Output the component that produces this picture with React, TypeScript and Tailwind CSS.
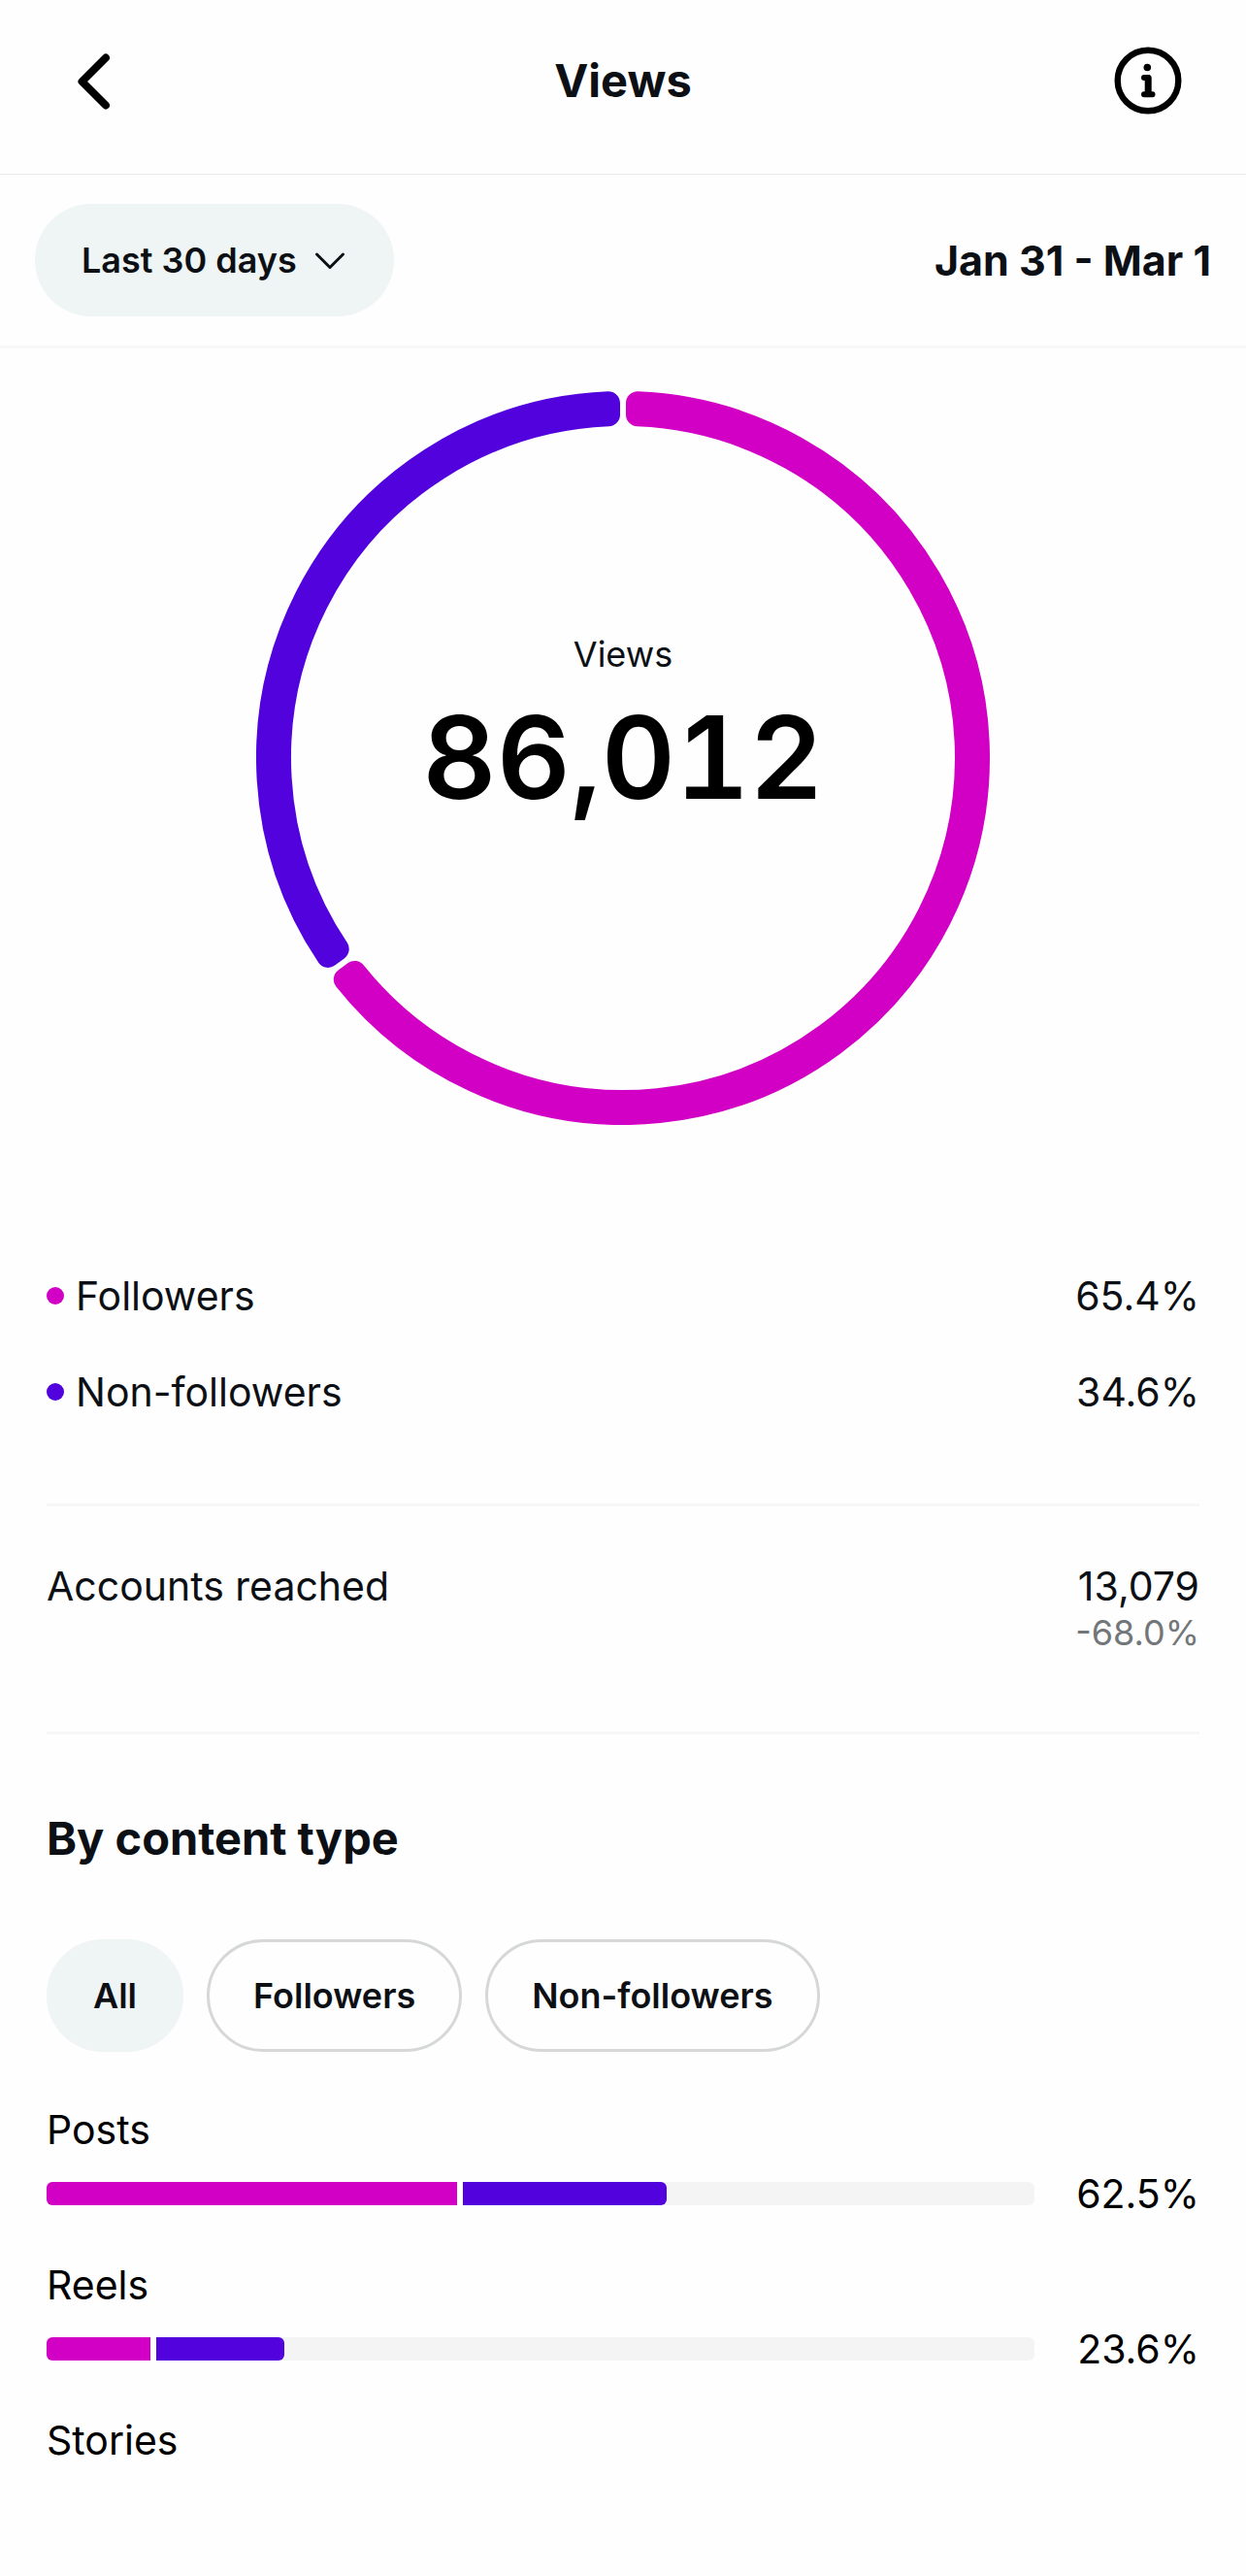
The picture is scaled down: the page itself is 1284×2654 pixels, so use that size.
import React, { useState } from 'react';

type Audience = 'All' | 'Followers' | 'Non-followers';

interface ContentRow {
  name: string;
  total: string;
  followers: number;
  nonFollowers: number;
}

const audiences: Audience[] = ['All', 'Followers', 'Non-followers'];

const contentRows: ContentRow[] = [
  { name: 'Posts', total: '62.5%', followers: 41.6, nonFollowers: 20.6 },
  { name: 'Reels', total: '23.6%', followers: 10.5, nonFollowers: 13 },
];

const CENTER = 378;
const CORNER = 12;
const GAP = 6;

// Ring slice with rounded corners: the outline is inset by the corner radius
// and then stroked with round joins.
const slicePath = (from: number, to: number) => {
  const outer = 378 - CORNER;
  const inner = 342 + CORNER;
  const point = (r: number, deg: number, side: number) => {
    const a = (deg * Math.PI) / 180 + side * Math.asin((GAP / 2 + CORNER) / r);
    return `${(CENTER + r * Math.sin(a)).toFixed(2)} ${(CENTER - r * Math.cos(a)).toFixed(2)}`;
  };
  const large = to - from > 180 ? 1 : 0;
  return [
    `M${point(outer, from, 1)}`,
    `A${outer} ${outer} 0 ${large} 1 ${point(outer, to, -1)}`,
    `L${point(inner, to, -1)}`,
    `A${inner} ${inner} 0 ${large} 0 ${point(inner, from, 1)}Z`,
  ].join('');
};

const ViewsRing = () => (
  <div className="relative mx-auto aspect-square w-[756px] max-w-full">
    <svg viewBox="0 0 756 756" className="block w-full" strokeWidth={CORNER * 2} strokeLinejoin="round" aria-hidden="true">
      <path d={slicePath(0, 233.8)} fill="#d100c4" stroke="#d100c4" />
      <path d={slicePath(233.8, 360)} fill="#5203dd" stroke="#5203dd" />
    </svg>
    <div className="absolute inset-0 flex flex-col items-center justify-center gap-3.5 pb-15">
      <p className="text-[36px] leading-[44px]">Views</p>
      <p className="text-[118px] leading-[140px] font-semibold text-black tabular-nums">86,012</p>
    </div>
  </div>
);

const LegendRow = ({ label, value, dot }: { label: string; value: string; dot: string }) => (
  <div className="flex items-center justify-between">
    <span className="flex items-center gap-3">
      <span className={`size-[18px] rounded-full ${dot}`} />
      {label}
    </span>
    <span>{value}</span>
  </div>
);

const ContentBar = ({ row }: { row: ContentRow }) => (
  <div>
    <p>{row.name}</p>
    <div className="mt-3.5 flex items-center">
      <div className="flex h-6 flex-1 overflow-hidden rounded-md bg-[#f4f4f4]">
        <div className="bg-[#d100c4]" style={{ width: `${row.followers}%` }} />
        <div className="w-1.5 bg-white" />
        <div className="rounded-r-md bg-[#5203dd]" style={{ width: `${row.nonFollowers}%` }} />
      </div>
      <span className="w-[170px] text-right">{row.total}</span>
    </div>
  </div>
);

const App: React.FC = () => {
  const [period, setPeriod] = useState('Last 30 days');
  const [audience, setAudience] = useState<Audience>('All');

  return (
    <div className="min-h-screen bg-[#fefefe] font-['Inter',sans-serif] text-[41px] leading-[52px] text-[#0c1014]">
      <header className="flex h-[180px] items-center justify-between border-b border-[#e7eaeb] px-[66px] pb-3.5">
        <button type="button" aria-label="Back" className="flex size-[70px] items-center justify-center">
          <svg viewBox="0 0 70 70" className="size-[70px]" fill="none" stroke="#000" strokeWidth="8" strokeLinecap="round" strokeLinejoin="round">
            <path d="M43 11.500 18.500 36 43 60.500" />
          </svg>
        </button>
        <h1 className="text-[47px] leading-[56px] font-bold">Views</h1>
        <button type="button" aria-label="About views" className="flex size-[70px] items-center justify-center">
          <svg viewBox="0 0 70 70" className="size-[70px]" fill="none" stroke="#000" strokeWidth="6" strokeLinecap="round" strokeLinejoin="round">
            <circle cx="35" cy="35" r="31.300" strokeWidth="6.400" />
            <circle cx="34.300" cy="21.500" r="3.800" fill="#000" stroke="none" />
            <path d="M31 32h4M31 49.200h8.500" />
            <path d="M35.200 32.600v16" strokeWidth="7" />
          </svg>
        </button>
      </header>

      {/* Period */}
      <div className="flex items-center justify-between border-b-3 border-[#f7f7f7] px-9 py-[30px]">
        <div className="relative">
          <select
            aria-label="Period"
            className="h-[116px] w-[370px] appearance-none rounded-full bg-[#eff4f5] pl-12 text-[36px] leading-[44px] font-semibold"
            value={period}
            onChange={(e) => setPeriod(e.target.value)}
          >
            <option>Last 7 days</option>
            <option>Last 30 days</option>
            <option>Last 90 days</option>
          </select>
          <svg viewBox="0 0 34 20" className="pointer-events-none absolute top-[49px] right-[49px] h-5 w-[34px]" fill="none" stroke="#0c1014" strokeWidth="3" strokeLinecap="round" strokeLinejoin="round">
            <path d="M3.500 3 17 16.500 30.500 3" />
          </svg>
        </div>
        <span className="text-[43px] font-bold">Jan 31 - Mar 1</span>
      </div>

      <main className="px-12 pt-11 pb-20">
        <ViewsRing />

        <section className="mt-[150px] flex flex-col gap-[47px] border-b-3 border-[#f7f7f7] pb-[89px]">
          <LegendRow label="Followers" value="65.4%" dot="bg-[#d100c4]" />
          <LegendRow label="Non-followers" value="34.6%" dot="bg-[#5203dd]" />
        </section>

        <section className="flex items-start justify-between border-b-3 border-[#f7f7f7] pt-14 pb-20">
          <span>Accounts reached</span>
          <div className="text-right">
            <p>13,079</p>
            <p className="text-[36px] leading-[44px] text-[#737679]">-68.0%</p>
          </div>
        </section>

        <section className="pt-[79px]">
          <h2 className="text-[47px] leading-[56px] font-bold">By content type</h2>
          <div className="mt-[76px] flex gap-6">
            {audiences.map((name) => (
              <button
                key={name}
                type="button"
                aria-pressed={audience === name}
                onClick={() => setAudience(name)}
                className={`h-[116px] rounded-full border-3 px-[45px] text-[36px] leading-[44px] font-semibold ${
                  audience === name ? 'border-[#eff4f5] bg-[#eff4f5]' : 'border-[#d6d7d8] bg-transparent'
                }`}
              >
                {name}
              </button>
            ))}
          </div>

          <div className="mt-[54px] flex flex-col gap-[42px] text-black">
            {contentRows.map((row) => (
              <ContentBar key={row.name} row={row} />
            ))}
            <p>Stories</p>
          </div>
        </section>
      </main>
    </div>
  );
};

export default App;
